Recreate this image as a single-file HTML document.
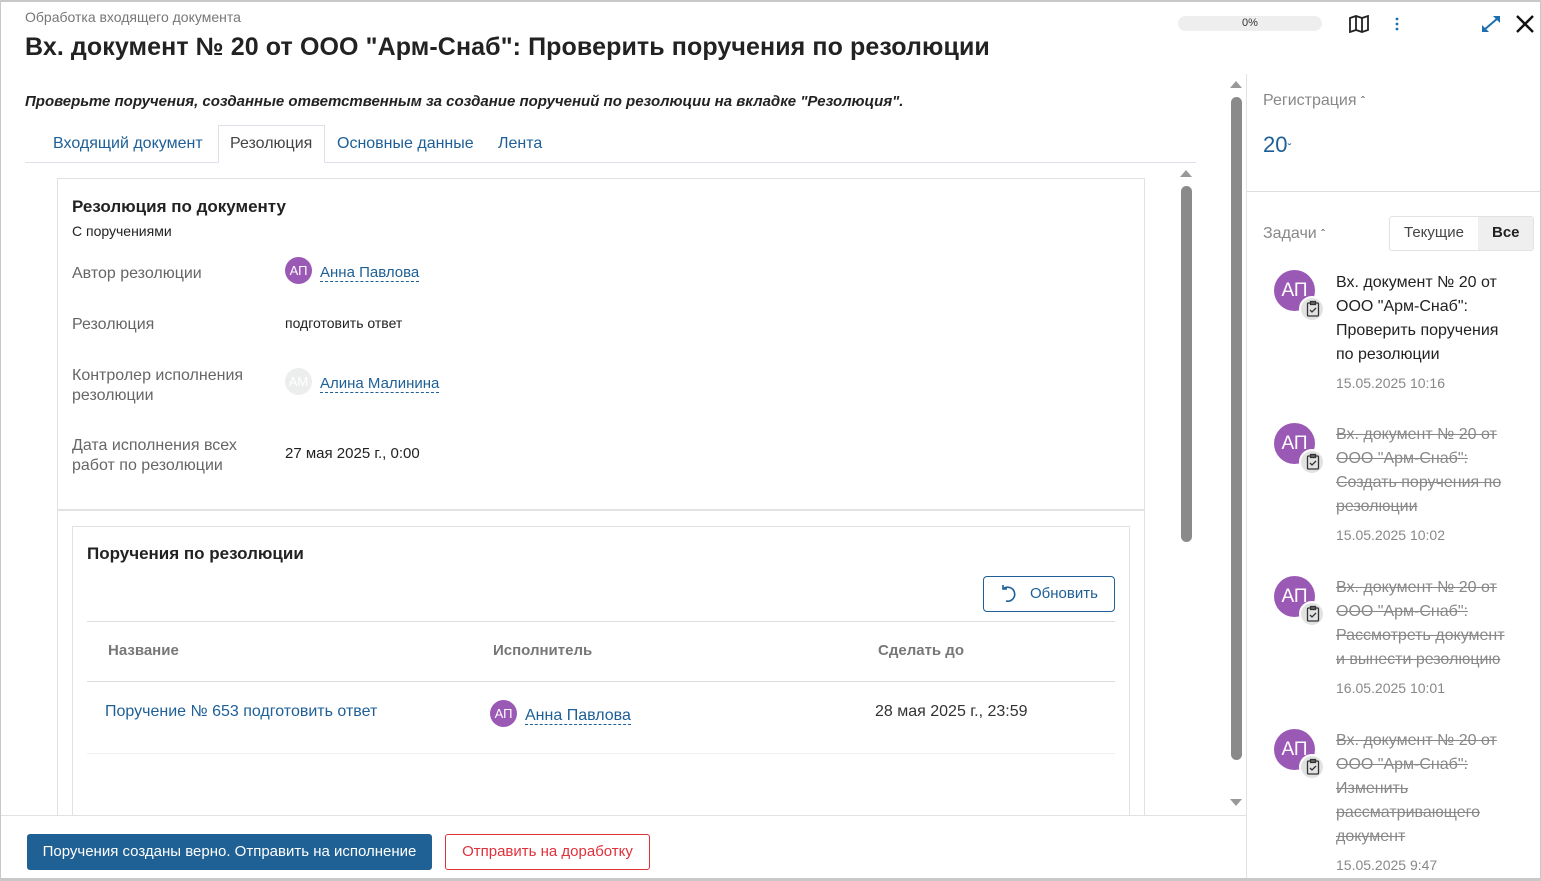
<!DOCTYPE html>
<html><head><meta charset="utf-8"><style>
*{box-sizing:border-box;margin:0;padding:0}
body{width:1541px;height:881px;overflow:hidden;background:#fff;font-family:"Liberation Sans",sans-serif;color:#222;position:relative}
.a{position:absolute;white-space:nowrap}
.frame{position:absolute;left:0;top:0;width:1541px;height:881px;border:2px solid #c8c8c8;border-right:1px solid #c8c8c8;border-left:1px solid #c8c8c8}
.lnk{color:#1d5f96;text-decoration:none;border-bottom:1px dashed #1d5f96}
.lbl{color:#666;font-size:16px;line-height:20px}
.val{font-size:15px;color:#222}
.av{position:absolute;border-radius:50%;background:#9b59b6;color:#fff;text-align:center;font-size:14px}
.task{color:#888;font-size:16px;line-height:24px;text-decoration:line-through}
.date{color:#888;font-size:14px}
.badge{position:absolute;width:26px;height:26px;border-radius:50%;background:#e2e2e2;border:2px solid #fff}
</style></head><body>
<div class="frame"></div>
<div class="a" style="left:25px;top:9px;font-size:14px;color:#777">Обработка входящего документа</div>
<div class="a" style="left:25px;top:33px;font-size:25px;color:#222;font-weight:bold;letter-spacing:0.1px">Вх. документ № 20 от ООО "Арм-Снаб": Проверить поручения по резолюции</div>
<!-- top right -->
<div class="a" style="left:1178px;top:16px;width:144px;height:15px;border-radius:8px;background:#eee;font-size:11px;text-align:center;line-height:15px;color:#333">0%</div>
<svg class="a" style="left:1348px;top:15px" width="22" height="18" viewBox="0 0 22 18" fill="none" stroke="#222" stroke-width="1.8"><path d="M2 3l6-2 6 2 6-2v14l-6 2-6-2-6 2z M8 1v14 M14 3v14"/></svg>
<svg class="a" style="left:1394px;top:16px" width="6" height="16" viewBox="0 0 6 16" fill="#1d6fb0"><circle cx="3" cy="3" r="1.4"/><circle cx="3" cy="8" r="1.4"/><circle cx="3" cy="13" r="1.4"/></svg>
<svg class="a" style="left:1480px;top:14px" width="22" height="20" viewBox="0 0 22 20" fill="#1d6fb0" stroke="#1d6fb0" stroke-width="2"><path d="M4 16L18 4" /><path d="M13 2h7v7z" stroke="none"/><path d="M2 11v7h7z" stroke="none"/></svg>
<svg class="a" style="left:1515px;top:14px" width="20" height="20" viewBox="0 0 20 20" stroke="#111" stroke-width="2.4"><path d="M2 2L18 18M18 2L2 18"/></svg>
<div class="a" style="left:25px;top:93px;font-size:15px;font-style:italic;font-weight:bold;color:#222">Проверьте поручения, созданные ответственным за создание поручений по резолюции на вкладке "Резолюция".</div>
<!-- tabs -->
<div class="a" style="left:25px;top:162px;width:1171px;height:1px;background:#dde0ea"></div>
<div class="a" style="left:218px;top:125px;width:107px;height:38px;border:1px solid #dde0ea;border-bottom:1px solid #fff;background:#fff"></div>
<div class="a" style="left:53px;top:135px;font-size:16px;color:#1d5f96">Входящий документ</div>
<div class="a" style="left:230px;top:135px;font-size:16px;color:#444">Резолюция</div>
<div class="a" style="left:337px;top:135px;font-size:16px;color:#1d5f96">Основные данные</div>
<div class="a" style="left:498px;top:135px;font-size:16px;color:#1d5f96">Лента</div>
<!-- card 1 -->
<div class="a" style="left:57px;top:178px;width:1088px;height:660px;border:1px solid #e2e2e2"></div>
<div class="a" style="left:57px;top:509px;width:1088px;height:2px;background:#e2e2e2"></div>
<div class="a" style="left:72px;top:197px;font-size:17px;font-weight:bold;color:#222">Резолюция по документу</div>
<div class="a" style="left:72px;top:223px;font-size:14px;color:#222">С поручениями</div>
<div class="a lbl" style="left:72px;top:264px">Автор резолюции</div>
<div class="av" style="left:285px;top:257px;width:27px;height:27px;line-height:27px;font-size:13px">АП</div>
<div class="a val" style="left:320px;top:264px"><span class="lnk">Анна Павлова</span></div>
<div class="a lbl" style="left:72px;top:315px">Резолюция</div>
<div class="a" style="left:285px;top:315px;font-size:14px">подготовить ответ</div>
<div class="a lbl" style="left:72px;top:366px">Контролер исполнения<br>резолюции</div>
<div class="av" style="left:285px;top:368px;width:27px;height:27px;line-height:27px;font-size:13px;background:#eceeee;color:#fff">АМ</div>
<div class="a val" style="left:320px;top:375px"><span class="lnk">Алина Малинина</span></div>
<div class="a lbl" style="left:72px;top:436px">Дата исполнения всех<br>работ по резолюции</div>
<div class="a val" style="left:285px;top:445px">27 мая 2025 г., 0:00</div>
<!-- card 2 -->
<div class="a" style="left:72px;top:526px;width:1058px;height:300px;border:1px solid #e2e2e2"></div>
<div class="a" style="left:87px;top:544px;font-size:17px;font-weight:bold;color:#222">Поручения по резолюции</div>
<div class="a" style="left:983px;top:576px;width:132px;height:36px;border:1px solid #1d5f96;border-radius:4px;color:#1d5f96;font-size:15px;line-height:34px;padding-left:46px">Обновить</div>
<svg class="a" style="left:998px;top:584px" width="22" height="20" viewBox="0 0 22 20" fill="none" stroke="#1d5f96" stroke-width="1.6"><path d="M5 5A7 7 0 1 1 8 17"/><path d="M5 1v4h4"/></svg>
<div class="a" style="left:87px;top:621px;width:1028px;height:1px;background:#ddd"></div>
<div class="a" style="left:108px;top:642px;font-size:15px;color:#777;font-weight:bold">Название</div>
<div class="a" style="left:493px;top:642px;font-size:15px;color:#777;font-weight:bold">Исполнитель</div>
<div class="a" style="left:878px;top:642px;font-size:15px;color:#777;font-weight:bold">Сделать до</div>
<div class="a" style="left:87px;top:681px;width:1028px;height:1px;background:#ddd"></div>
<div class="a" style="left:105px;top:703px;font-size:16px;color:#1d5f96">Поручение № 653 подготовить ответ</div>
<div class="av" style="left:490px;top:700px;width:27px;height:27px;line-height:27px;font-size:13px">АП</div>
<div class="a" style="left:525px;top:707px;font-size:16px"><span class="lnk">Анна Павлова</span></div>
<div class="a" style="left:875px;top:703px;font-size:16px;color:#333">28 мая 2025 г., 23:59</div>
<div class="a" style="left:87px;top:753px;width:1028px;height:1px;background:#f0f0f0"></div>
<!-- inner scrollbar -->
<div class="a" style="left:1180px;top:170px;border-left:6px solid transparent;border-right:6px solid transparent;border-bottom:7px solid #999"></div>
<div class="a" style="left:1181px;top:186px;width:11px;height:356px;border-radius:6px;background:#8a8a8a"></div>
<!-- outer scrollbar -->
<div class="a" style="left:1230px;top:81px;border-left:6px solid transparent;border-right:6px solid transparent;border-bottom:7px solid #999"></div>
<div class="a" style="left:1231px;top:97px;width:11px;height:663px;border-radius:6px;background:#8a8a8a"></div>
<div class="a" style="left:1230px;top:799px;border-left:6px solid transparent;border-right:6px solid transparent;border-top:7px solid #999"></div>
<!-- footer -->
<div class="a" style="left:1px;top:815px;width:1245px;height:64px;background:#fff;border-top:1px solid #e2e2e2"></div>
<div class="a" style="left:27px;top:834px;width:405px;height:36px;background:#1f6194;border-radius:3px;color:#fff;font-size:15px;line-height:36px;text-align:center">Поручения созданы верно. Отправить на исполнение</div>
<div class="a" style="left:445px;top:834px;width:205px;height:36px;border:1px solid #e0313a;border-radius:3px;color:#e0313a;font-size:15px;line-height:34px;text-align:center">Отправить на доработку</div>
<!-- right panel -->
<div class="a" style="left:1246px;top:74px;width:1px;height:805px;background:#e2e2e2"></div>
<div class="a" style="left:1247px;top:191px;width:293px;height:1px;background:#ddd"></div>
<div class="a" style="left:1263px;top:92px;font-size:16px;color:#888">Регистрация <span style="font-size:12px;color:#555">ˆ</span></div>
<div class="a" style="left:1263px;top:132px;font-size:22px;color:#1d5f96">20<span style="font-size:12px">ˇ</span></div>
<div class="a" style="left:1263px;top:225px;font-size:16px;color:#888">Задачи <span style="font-size:12px;color:#555">ˆ</span></div>
<div class="a" style="left:1389px;top:216px;width:145px;height:35px;border:1px solid #e2e2e2;border-radius:3px"></div>
<div class="a" style="left:1478px;top:217px;width:55px;height:33px;background:#efefef"></div>
<div class="a" style="left:1404px;top:224px;font-size:15px;color:#444">Текущие</div>
<div class="a" style="left:1492px;top:224px;font-size:15px;font-weight:bold;color:#222">Все</div>

<div class="av" style="left:1274px;top:270px;width:41px;height:41px;line-height:41px;font-size:19px">АП</div><div class="badge" style="left:1299px;top:296px"></div>
<div class="a" style="left:1336px;top:271px;font-size:16px;line-height:24px;color:#222">Вх. документ № 20 от<br>ООО "Арм-Снаб":<br>Проверить поручения<br>по резолюции</div>
<div class="a date" style="left:1336px;top:375px">15.05.2025 10:16</div>

<div class="av" style="left:1274px;top:423px;width:41px;height:41px;line-height:41px;font-size:19px">АП</div><div class="badge" style="left:1299px;top:449px"></div>
<div class="a task" style="left:1336px;top:423px">Вх. документ № 20 от<br>ООО "Арм-Снаб":<br>Создать поручения по<br>резолюции</div>
<div class="a date" style="left:1336px;top:527px">15.05.2025 10:02</div>

<div class="av" style="left:1274px;top:576px;width:41px;height:41px;line-height:41px;font-size:19px">АП</div><div class="badge" style="left:1299px;top:601px"></div>
<div class="a task" style="left:1336px;top:576px">Вх. документ № 20 от<br>ООО "Арм-Снаб":<br>Рассмотреть документ<br>и вынести резолюцию</div>
<div class="a date" style="left:1336px;top:680px">16.05.2025 10:01</div>

<div class="av" style="left:1274px;top:729px;width:41px;height:41px;line-height:41px;font-size:19px">АП</div><div class="badge" style="left:1299px;top:754px"></div>
<div class="a task" style="left:1336px;top:729px">Вх. документ № 20 от<br>ООО "Арм-Снаб":<br>Изменить<br>рассматривающего<br>документ</div>
<div class="a date" style="left:1336px;top:857px">15.05.2025 9:47</div>
<svg class="a" style="left:1305px;top:300px" width="16" height="18" viewBox="0 0 16 18" fill="none" stroke="#333" stroke-width="1.3"><rect x="2.5" y="3" width="11" height="13" rx="1"/><rect x="5.5" y="1.5" width="5" height="3"/><path d="M5 10l2 2 4-4"/></svg>
<svg class="a" style="left:1305px;top:453px" width="16" height="18" viewBox="0 0 16 18" fill="none" stroke="#333" stroke-width="1.3"><rect x="2.5" y="3" width="11" height="13" rx="1"/><rect x="5.5" y="1.5" width="5" height="3"/><path d="M5 10l2 2 4-4"/></svg>
<svg class="a" style="left:1305px;top:605px" width="16" height="18" viewBox="0 0 16 18" fill="none" stroke="#333" stroke-width="1.3"><rect x="2.5" y="3" width="11" height="13" rx="1"/><rect x="5.5" y="1.5" width="5" height="3"/><path d="M5 10l2 2 4-4"/></svg>
<svg class="a" style="left:1305px;top:758px" width="16" height="18" viewBox="0 0 16 18" fill="none" stroke="#333" stroke-width="1.3"><rect x="2.5" y="3" width="11" height="13" rx="1"/><rect x="5.5" y="1.5" width="5" height="3"/><path d="M5 10l2 2 4-4"/></svg>
<div class="a" style="left:0;top:878px;width:1541px;height:3px;background:#c8c8c8"></div>
</body></html>
